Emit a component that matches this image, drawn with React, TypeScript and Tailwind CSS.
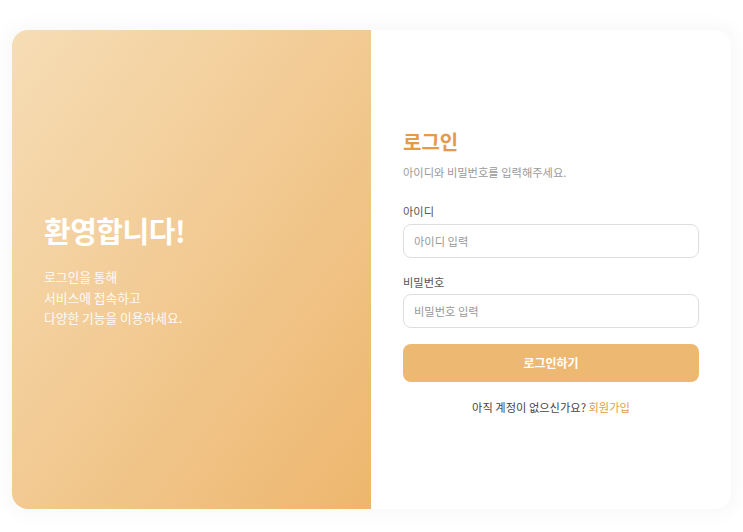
export default function App() {
  return (
    <div
      className="min-h-screen bg-white px-3 pt-[30px] pb-[23px]"
      style={{ fontFamily: '"Noto Sans CJK KR", "Noto Sans", sans-serif' }}
    >
      <div className="flex h-[479px] overflow-hidden rounded-2xl bg-white shadow-[0_0_18px_6px_rgba(0,0,0,0.03)]">
        {/* Welcome panel */}
        <div className="flex w-[359px] flex-col justify-center bg-gradient-to-br from-[#f6ddb5] to-[#edb66d] px-8 pt-[6px]">
          <h1 className="text-[29px] font-bold leading-none tracking-[-0.5px] text-white">환영합니다!</h1>
          <p className="mt-[22px] text-[12.75px] font-normal leading-[20.5px] text-white/90">
            로그인을 통해
            <br />
            서비스에 접속하고
            <br />
            다양한 기능을 이용하세요.
          </p>
        </div>

        {/* Login form */}
        <div className="flex flex-1 flex-col justify-center px-8 pt-[9px]">
          <h2 className="text-[20px] font-bold leading-none text-[#e39a4b]">로그인</h2>
          <p className="mt-[12px] text-[11.25px] font-normal leading-[17.5px] text-[#9a9a9a]">
            아이디와 비밀번호를 입력해주세요.
          </p>

          <label className="mt-[22px] text-[11.25px] font-normal leading-[17.5px] text-[#555]">아이디</label>
          <input
            className="mt-[3px] h-[34px] w-full rounded-lg border border-[#dedede] px-[10px] text-[11.25px] text-[#333] outline-none placeholder:text-[#999]"
            placeholder="아이디 입력"
          />

          <label className="mt-[16px] text-[11.25px] font-normal leading-[17.5px] text-[#555]">비밀번호</label>
          <input
            type="password"
            className="mt-[3px] h-[34px] w-full rounded-lg border border-[#dedede] px-[10px] text-[11.25px] text-[#333] outline-none placeholder:text-[#999]"
            placeholder="비밀번호 입력"
          />

          <button
            type="button"
            className="mt-[16px] h-[38px] w-full rounded-lg bg-[#edb972] text-[12px] font-bold text-white"
          >
            로그인하기
          </button>

          <p className="mt-[17px] text-center text-[11.25px] font-normal leading-[17.5px] text-[#444]">
            아직 계정이 없으신가요? <span className="text-[#e39a4b]">회원가입</span>
          </p>
        </div>
      </div>
    </div>
  );
}
